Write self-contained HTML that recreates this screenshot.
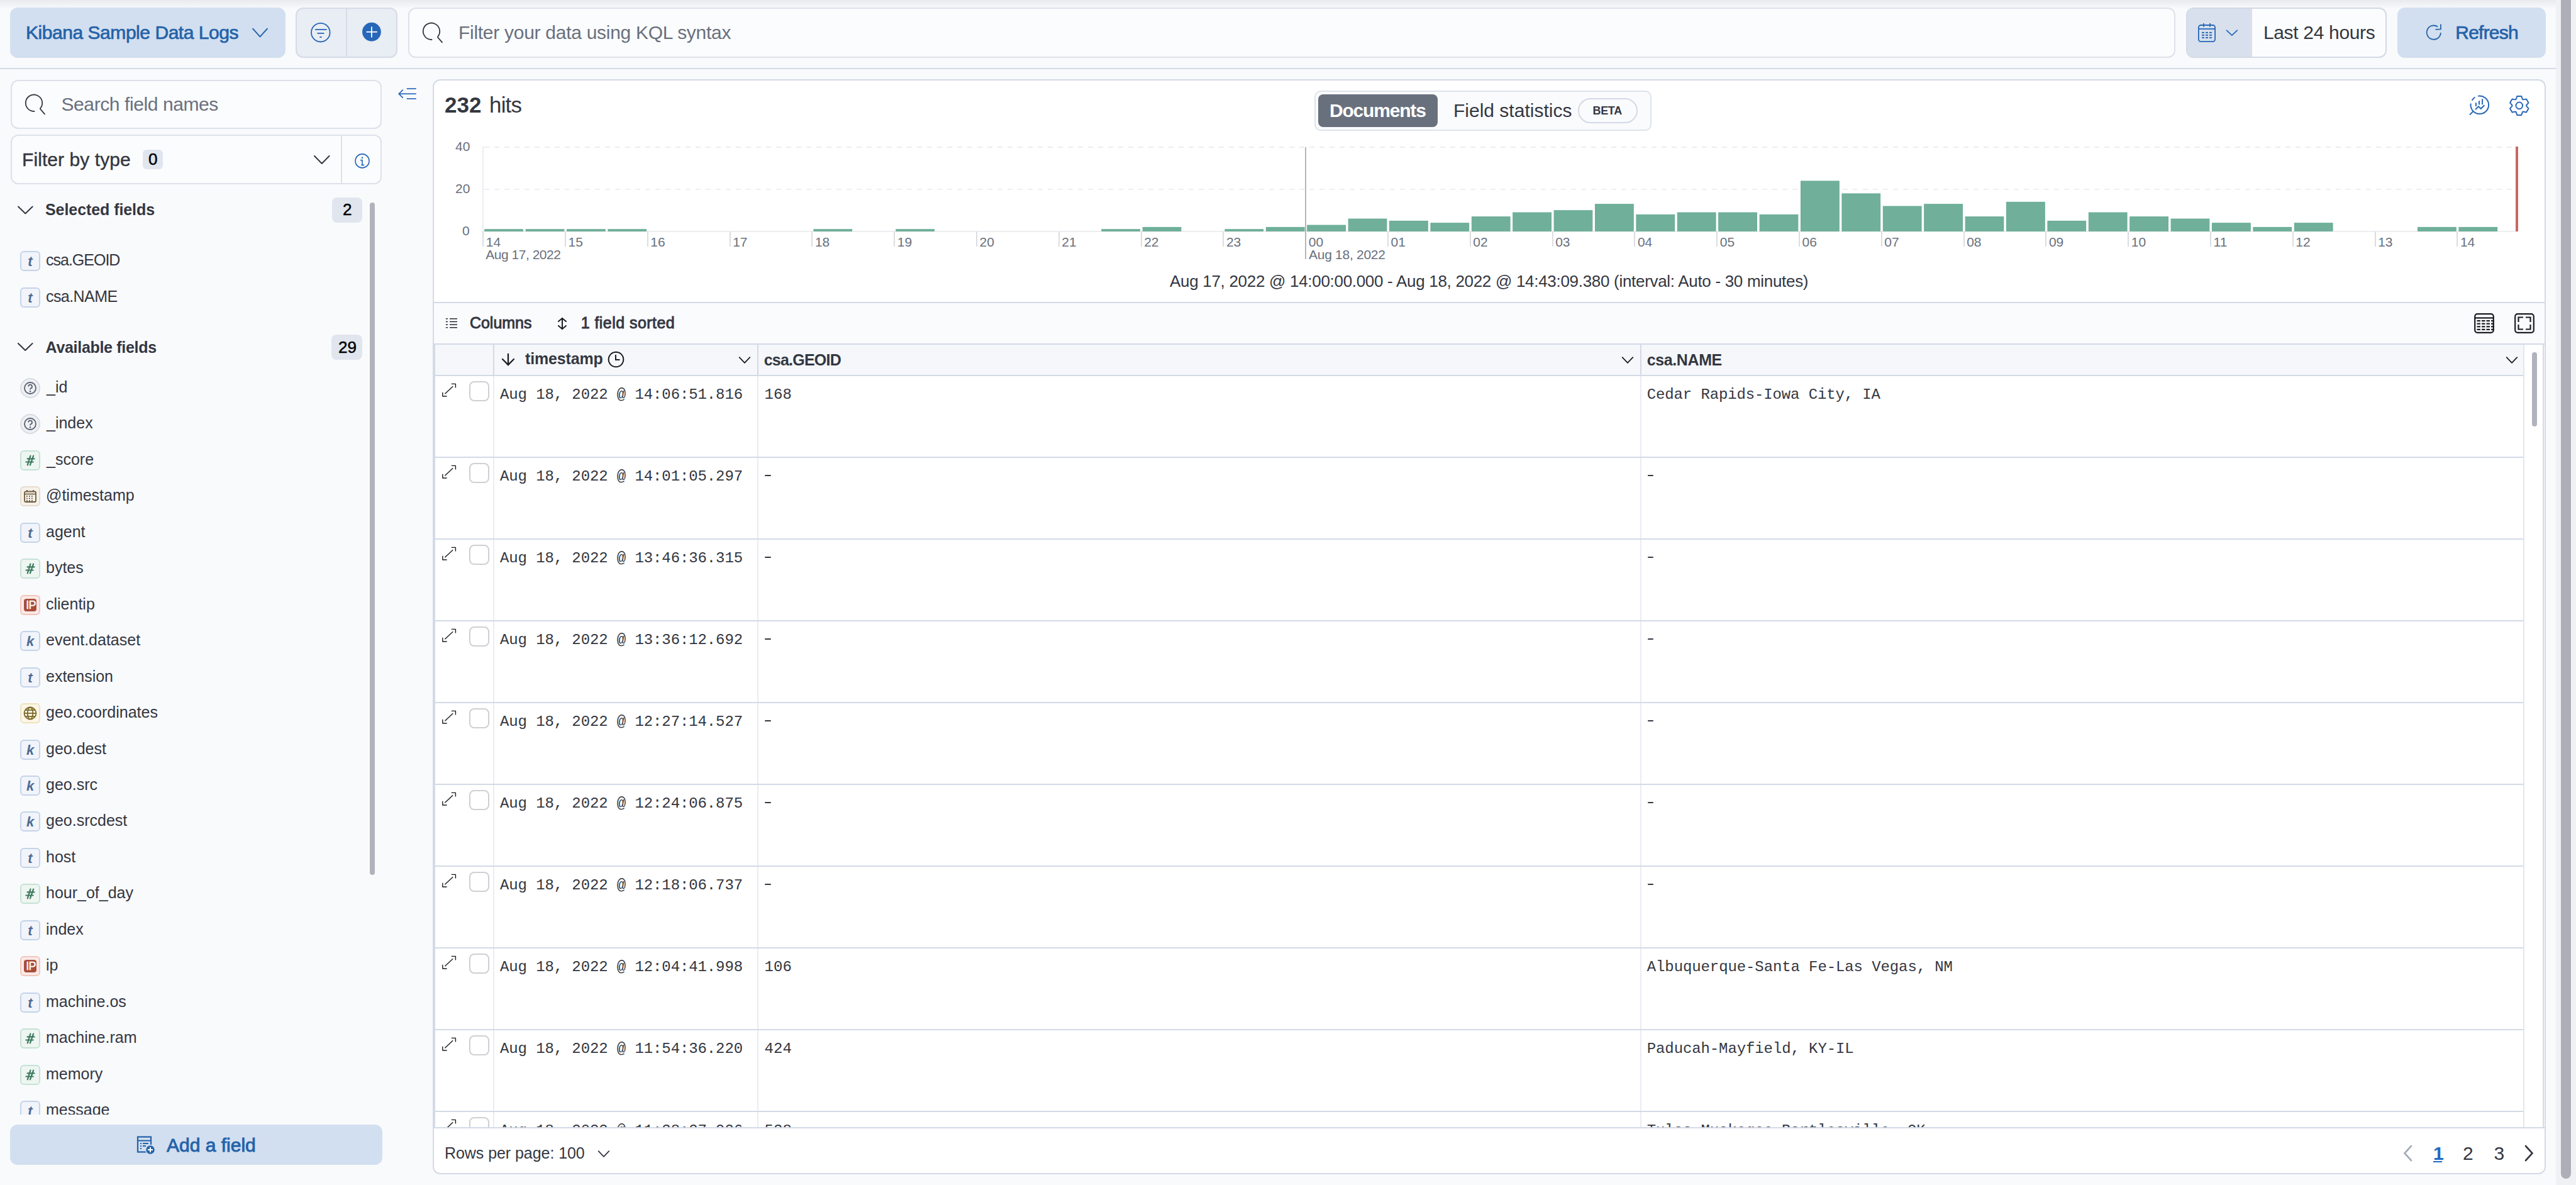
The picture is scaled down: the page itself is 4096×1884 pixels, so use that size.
<!DOCTYPE html><html><head><meta charset="utf-8"><style>
html,body{margin:0;padding:0;}
body{width:4096px;height:1884px;overflow:hidden;position:relative;background:#f9fafc;font-family:'Liberation Sans',sans-serif;}
.t{position:absolute;white-space:pre;}
.b{position:absolute;box-sizing:border-box;}
svg.b{overflow:visible;}
</style></head><body>
<div class="b" style="left:0px;top:0px;width:4064px;height:14px;background:linear-gradient(#e9eaee,rgba(249,250,252,0));"></div>
<div class="b" style="left:16px;top:12px;width:438px;height:80px;background:#d2dff0;border-radius:12px;"></div>
<div class="t" style="left:41.00px;top:37px;font-size:30px;line-height:30px;font-weight:400;font-family:'Liberation Sans',sans-serif;color:#2462a8;letter-spacing:-0.455px;-webkit-text-stroke:0.7px #2462a8;">Kibana Sample Data Logs</div>
<svg class="b" style="left:398px;top:42px;" width="31" height="21" viewBox="0 0 31 21"><polyline points="4.00,3.70 15.50,16.30 27.00,3.70" fill="none" stroke="#2462a8" stroke-width="2" stroke-linecap="round" stroke-linejoin="round"/></svg>
<div class="b" style="left:470px;top:12px;width:162px;height:80px;background:#e9edf4;border:2px solid #d5dbe7;border-radius:12px;"></div>
<div class="b" style="left:550px;top:12px;width:2px;height:80px;background:#d5dbe7;"></div>
<svg class="b" style="left:490px;top:32px;" width="40" height="40" viewBox="0 0 40 40"><circle cx="19.8" cy="19.7" r="14.8" fill="none" stroke="#2767b9" stroke-width="1.8"/><line x1="11" y1="15" x2="29.6" y2="15" stroke="#2767b9" stroke-width="1.8"/><line x1="14.4" y1="20.9" x2="25.4" y2="20.9" stroke="#2767b9" stroke-width="1.8"/><line x1="18.3" y1="27" x2="21.7" y2="27" stroke="#2767b9" stroke-width="1.8"/></svg>
<svg class="b" style="left:570px;top:30px;" width="40" height="40" viewBox="0 0 40 40"><circle cx="20.9" cy="20.75" r="14.9" fill="#2767b9"/><line x1="20.9" y1="12.4" x2="20.9" y2="29.6" stroke="#fff" stroke-width="1.8"/><line x1="12.5" y1="20.75" x2="29.8" y2="20.75" stroke="#fff" stroke-width="1.8"/></svg>
<div class="b" style="left:649px;top:12px;width:2810px;height:80px;background:#fbfcfd;border:2px solid #dde1ea;border-radius:12px;"></div>
<svg class="b" style="left:672px;top:36px;" width="32" height="32" viewBox="0 0 32 32"><path d="M 14.46 26.99 A 13.2 13.2 0 1 1 24.11 22.29" fill="none" stroke="#343741" stroke-width="1.8" stroke-linecap="round"/><line x1="23.9" y1="23.2" x2="31" y2="31.3" stroke="#343741" stroke-width="1.8" stroke-linecap="round"/></svg>
<div class="t" style="left:729.00px;top:37px;font-size:30px;line-height:30px;font-weight:400;font-family:'Liberation Sans',sans-serif;color:#69707d;letter-spacing:-0.281px;">Filter your data using KQL syntax</div>
<div class="b" style="left:3476px;top:12px;width:319px;height:80px;background:#fbfcfd;border:2px solid #d3d9e4;border-radius:12px;overflow:hidden;"></div>
<div class="b" style="left:3478px;top:14px;width:103px;height:76px;background:#d7e0ec;border-radius:10px 0 0 10px;"></div>
<svg class="b" style="left:3485px;top:25px;" width="50" height="50" viewBox="0 0 50 50"><rect x="10.9" y="15" width="26.2" height="26.1" rx="3.6" fill="none" stroke="#2767b9" stroke-width="1.8"/><line x1="10.9" y1="21" x2="37.1" y2="21" stroke="#2767b9" stroke-width="1.8"/><line x1="19" y1="12" x2="19" y2="17.7" stroke="#2767b9" stroke-width="1.8"/><line x1="29" y1="12" x2="29" y2="17.7" stroke="#2767b9" stroke-width="1.8"/><rect x="16" y="25.9" width="4" height="1.9" fill="#2767b9"/><rect x="16" y="29.9" width="4" height="1.9" fill="#2767b9"/><rect x="16" y="33.9" width="4" height="1.9" fill="#2767b9"/><rect x="22" y="25.9" width="4" height="1.9" fill="#2767b9"/><rect x="22" y="29.9" width="4" height="1.9" fill="#2767b9"/><rect x="22" y="33.9" width="4" height="1.9" fill="#2767b9"/><rect x="28" y="25.9" width="4" height="1.9" fill="#2767b9"/><rect x="28" y="29.9" width="4" height="1.9" fill="#2767b9"/><rect x="28" y="33.9" width="4" height="1.9" fill="#2767b9"/></svg>
<svg class="b" style="left:3537px;top:44px;" width="25" height="16" viewBox="0 0 25 16"><polyline points="3.60,4.28 11.90,12.12 20.20,4.28" fill="none" stroke="#2767b9" stroke-width="1.8" stroke-linecap="round" stroke-linejoin="round"/></svg>
<div class="t" style="left:3598.90px;top:37px;font-size:30px;line-height:30px;font-weight:400;font-family:'Liberation Sans',sans-serif;color:#343741;letter-spacing:-0.325px;">Last 24 hours</div>
<div class="b" style="left:3812px;top:12px;width:236px;height:80px;background:#d2dff0;border-radius:12px;"></div>
<svg class="b" style="left:3840px;top:25px;" width="50" height="50" viewBox="0 0 50 50"><path d="M 36.1 17.5 A 11.1 11.1 0 1 0 40.9 27" fill="none" stroke="#2462a8" stroke-width="1.8" stroke-linecap="butt"/><polyline points="41,13.5 41,21.4 32.6,21.9" fill="none" stroke="#2462a8" stroke-width="1.8" stroke-linejoin="round"/></svg>
<div class="t" style="left:3904.30px;top:37px;font-size:30px;line-height:30px;font-weight:400;font-family:'Liberation Sans',sans-serif;color:#2462a8;letter-spacing:-0.783px;-webkit-text-stroke:0.7px #2462a8;">Refresh</div>
<div class="b" style="left:0px;top:108px;width:4064px;height:2px;background:#d3dae6;"></div>
<div class="b" style="left:4064px;top:0px;width:32px;height:1884px;background:#f0f1f4;"></div>
<div class="b" style="left:4072px;top:0px;width:16px;height:1874px;background:#acafb7;border-radius:0 0 8px 8px;"></div>
<div class="b" style="left:17px;top:127px;width:590px;height:78px;background:#fbfcfd;border:2px solid #dde1ea;border-radius:12px;"></div>
<svg class="b" style="left:40px;top:150px;" width="32" height="32" viewBox="0 0 32 32"><path d="M 14.46 26.99 A 13.2 13.2 0 1 1 24.11 22.29" fill="none" stroke="#343741" stroke-width="1.8" stroke-linecap="round"/><line x1="23.9" y1="23.2" x2="31" y2="31.3" stroke="#343741" stroke-width="1.8" stroke-linecap="round"/></svg>
<div class="t" style="left:97.50px;top:151px;font-size:30px;line-height:30px;font-weight:400;font-family:'Liberation Sans',sans-serif;color:#69707d;letter-spacing:-0.412px;">Search field names</div>
<div class="b" style="left:17px;top:214px;width:590px;height:79px;background:#fbfcfd;border:2px solid #dde1ea;border-radius:12px;"></div>
<div class="b" style="left:542px;top:214px;width:2px;height:79px;background:#dde1ea;"></div>
<div class="t" style="left:35.00px;top:239px;font-size:30px;line-height:30px;font-weight:400;font-family:'Liberation Sans',sans-serif;color:#343741;letter-spacing:0.077px;-webkit-text-stroke:0.4px #343741;">Filter by type</div>
<div class="b" style="left:227px;top:238px;width:32px;height:31px;background:#e0e5ee;border-radius:6px;"></div>
<div class="t" style="left:236.00px;top:240px;font-size:26px;line-height:26px;font-weight:400;font-family:'Liberation Sans',sans-serif;color:#000;letter-spacing:0.000px;-webkit-text-stroke:0.5px #000;">0</div>
<svg class="b" style="left:496px;top:244px;" width="32" height="20" viewBox="0 0 32 20"><polyline points="4.00,3.95 15.75,16.05 27.50,3.95" fill="none" stroke="#343741" stroke-width="2" stroke-linecap="round" stroke-linejoin="round"/></svg>
<svg class="b" style="left:556px;top:236px;" width="40" height="40" viewBox="0 0 40 40"><circle cx="20" cy="19.9" r="11" fill="none" stroke="#2767b9" stroke-width="1.6"/><circle cx="20" cy="14.7" r="1.3" fill="#2767b9"/><path d="M 17 18.6 H 20 V 26.4 M 18.3 26.4 H 23.2" fill="none" stroke="#2767b9" stroke-width="1.6"/></svg>
<svg class="b" style="left:25px;top:324px;" width="31" height="19" viewBox="0 0 31 19"><polyline points="4.00,4.45 15.35,15.55 26.70,4.45" fill="none" stroke="#343741" stroke-width="2" stroke-linecap="round" stroke-linejoin="round"/></svg>
<div class="t" style="left:72.00px;top:321px;font-size:25px;line-height:25px;font-weight:700;font-family:'Liberation Sans',sans-serif;color:#343741;letter-spacing:-0.071px;">Selected fields</div>
<div class="b" style="left:528px;top:314px;width:48px;height:40px;background:#e0e5ee;border-radius:8px;"></div>
<div class="t" style="left:545.00px;top:320px;font-size:26px;line-height:26px;font-weight:400;font-family:'Liberation Sans',sans-serif;color:#000;letter-spacing:0.000px;-webkit-text-stroke:0.5px #000;">2</div>
<div class="b" style="left:588px;top:322px;width:8px;height:1069px;background:#b0b3bc;border-radius:4px;"></div>
<div class="b" style="left:32px;top:399px;width:32px;height:32px;background:#f1f4fa;border:2px solid #c5d3e8;border-radius:6px;"></div>
<div class="t" style="left:32px;top:399px;width:32px;height:32px;text-align:center;font:italic bold 22px/33px 'Liberation Sans',sans-serif;color:#4d6b94;">t</div>
<div class="t" style="left:73.00px;top:401px;font-size:25px;line-height:25px;font-weight:400;font-family:'Liberation Sans',sans-serif;color:#343741;letter-spacing:-1.000px;">csa.GEOID</div>
<div class="b" style="left:32px;top:457px;width:32px;height:32px;background:#f1f4fa;border:2px solid #c5d3e8;border-radius:6px;"></div>
<div class="t" style="left:32px;top:457px;width:32px;height:32px;text-align:center;font:italic bold 22px/33px 'Liberation Sans',sans-serif;color:#4d6b94;">t</div>
<div class="t" style="left:73.00px;top:459px;font-size:25px;line-height:25px;font-weight:400;font-family:'Liberation Sans',sans-serif;color:#343741;letter-spacing:-0.571px;">csa.NAME</div>
<svg class="b" style="left:25px;top:542px;" width="31" height="19" viewBox="0 0 31 19"><polyline points="3.85,3.95 15.20,15.05 26.55,3.95" fill="none" stroke="#343741" stroke-width="2" stroke-linecap="round" stroke-linejoin="round"/></svg>
<div class="t" style="left:72.60px;top:540px;font-size:25px;line-height:25px;font-weight:700;font-family:'Liberation Sans',sans-serif;color:#343741;letter-spacing:-0.307px;">Available fields</div>
<div class="b" style="left:527px;top:532px;width:49px;height:40px;background:#e0e5ee;border-radius:8px;"></div>
<div class="t" style="left:538.00px;top:539px;font-size:26px;line-height:26px;font-weight:400;font-family:'Liberation Sans',sans-serif;color:#000;letter-spacing:0.000px;-webkit-text-stroke:0.5px #000;">29</div>
<div class="b" style="left:0;top:580px;width:586px;height:1192px;overflow:hidden;">
<div class="b" style="left:32px;top:21px;width:32px;height:32px;background:#eef0f3;border:2px solid #d8dce3;border-radius:16px;"></div>
<svg class="b" style="left:32px;top:21px;" width="32" height="32" viewBox="0 0 32 32"><circle cx="16" cy="16" r="9" fill="none" stroke="#5a6070" stroke-width="1.8"/><path d="M 13.2 13.6 A 2.9 2.9 0 1 1 16.8 16.4 Q 16 17 16 18.6" fill="none" stroke="#5a6070" stroke-width="1.8"/><circle cx="16" cy="21.3" r="1.2" fill="#5a6070"/></svg>
<div class="t" style="left:74.00px;top:23px;font-size:25px;line-height:25px;font-weight:400;font-family:'Liberation Sans',sans-serif;color:#343741;letter-spacing:0.000px;">_id</div>
<div class="b" style="left:32px;top:78px;width:32px;height:32px;background:#eef0f3;border:2px solid #d8dce3;border-radius:16px;"></div>
<svg class="b" style="left:32px;top:78px;" width="32" height="32" viewBox="0 0 32 32"><circle cx="16" cy="16" r="9" fill="none" stroke="#5a6070" stroke-width="1.8"/><path d="M 13.2 13.6 A 2.9 2.9 0 1 1 16.8 16.4 Q 16 17 16 18.6" fill="none" stroke="#5a6070" stroke-width="1.8"/><circle cx="16" cy="21.3" r="1.2" fill="#5a6070"/></svg>
<div class="t" style="left:74.00px;top:80px;font-size:25px;line-height:25px;font-weight:400;font-family:'Liberation Sans',sans-serif;color:#343741;letter-spacing:0.000px;">_index</div>
<div class="b" style="left:32px;top:136px;width:32px;height:32px;background:#eef6f2;border:2px solid #c4e2d5;border-radius:6px;"></div>
<svg class="b" style="left:32px;top:136px;" width="32" height="32" viewBox="0 0 32 32"><g stroke="#3f7a62" stroke-width="2.2" stroke-linecap="round"><line x1="16.4" y1="8.6" x2="11.8" y2="23.4"/><line x1="21.1" y1="8.6" x2="15.9" y2="23.4"/><line x1="11.6" y1="13.4" x2="22.5" y2="13.4"/><line x1="9.4" y1="18.5" x2="20.7" y2="18.5"/></g></svg>
<div class="t" style="left:74.00px;top:138px;font-size:25px;line-height:25px;font-weight:400;font-family:'Liberation Sans',sans-serif;color:#343741;letter-spacing:0.000px;">_score</div>
<div class="b" style="left:32px;top:193px;width:32px;height:32px;background:#f6f1ea;border:2px solid #e6dccd;border-radius:6px;"></div>
<svg class="b" style="left:32px;top:193px;" width="32" height="32" viewBox="0 0 32 32"><rect x="7" y="8.5" width="18" height="16.5" rx="2" fill="none" stroke="#6e5a3c" stroke-width="1.8"/><line x1="7" y1="12.5" x2="25" y2="12.5" stroke="#6e5a3c" stroke-width="1.6"/><line x1="11" y1="6" x2="11" y2="9" stroke="#6e5a3c" stroke-width="1.8"/><line x1="21" y1="6" x2="21" y2="9" stroke="#6e5a3c" stroke-width="1.8"/><rect x="10" y="15.0" width="1.8" height="1.8" fill="#6e5a3c"/><rect x="10" y="18.6" width="1.8" height="1.8" fill="#6e5a3c"/><rect x="10" y="22.2" width="1.8" height="1.8" fill="#6e5a3c"/><rect x="14" y="15.0" width="1.8" height="1.8" fill="#6e5a3c"/><rect x="14" y="18.6" width="1.8" height="1.8" fill="#6e5a3c"/><rect x="14" y="22.2" width="1.8" height="1.8" fill="#6e5a3c"/><rect x="18" y="15.0" width="1.8" height="1.8" fill="#6e5a3c"/><rect x="18" y="18.6" width="1.8" height="1.8" fill="#6e5a3c"/><rect x="18" y="22.2" width="1.8" height="1.8" fill="#6e5a3c"/></svg>
<div class="t" style="left:73.00px;top:195px;font-size:25px;line-height:25px;font-weight:400;font-family:'Liberation Sans',sans-serif;color:#343741;letter-spacing:0.000px;">@timestamp</div>
<div class="b" style="left:32px;top:251px;width:32px;height:32px;background:#f1f4fa;border:2px solid #c5d3e8;border-radius:6px;"></div>
<div class="t" style="left:32px;top:251px;width:32px;height:32px;text-align:center;font:italic bold 22px/33px 'Liberation Sans',sans-serif;color:#4d6b94;">t</div>
<div class="t" style="left:73.00px;top:253px;font-size:25px;line-height:25px;font-weight:400;font-family:'Liberation Sans',sans-serif;color:#343741;letter-spacing:0.000px;">agent</div>
<div class="b" style="left:32px;top:308px;width:32px;height:32px;background:#eef6f2;border:2px solid #c4e2d5;border-radius:6px;"></div>
<svg class="b" style="left:32px;top:308px;" width="32" height="32" viewBox="0 0 32 32"><g stroke="#3f7a62" stroke-width="2.2" stroke-linecap="round"><line x1="16.4" y1="8.6" x2="11.8" y2="23.4"/><line x1="21.1" y1="8.6" x2="15.9" y2="23.4"/><line x1="11.6" y1="13.4" x2="22.5" y2="13.4"/><line x1="9.4" y1="18.5" x2="20.7" y2="18.5"/></g></svg>
<div class="t" style="left:73.00px;top:310px;font-size:25px;line-height:25px;font-weight:400;font-family:'Liberation Sans',sans-serif;color:#343741;letter-spacing:0.000px;">bytes</div>
<div class="b" style="left:32px;top:366px;width:32px;height:32px;background:#fbe9e6;border:2px solid #f2c6bd;border-radius:6px;"></div>
<div class="b" style="left:38px;top:372px;width:20px;height:20px;background:#a94d3a;border-radius:4px;"></div>
<div class="t" style="left:41.20px;top:373px;font-size:18px;line-height:18px;font-weight:400;font-family:'Liberation Sans',sans-serif;color:#fff;letter-spacing:0.000px;-webkit-text-stroke:0.4px #fff;letter-spacing:-0.8px;">IP</div>
<div class="t" style="left:73.00px;top:368px;font-size:25px;line-height:25px;font-weight:400;font-family:'Liberation Sans',sans-serif;color:#343741;letter-spacing:0.000px;">clientip</div>
<div class="b" style="left:32px;top:423px;width:32px;height:32px;background:#f1f4fa;border:2px solid #c5d3e8;border-radius:6px;"></div>
<div class="t" style="left:32px;top:423px;width:32px;height:32px;text-align:center;font:italic bold 22px/33px 'Liberation Sans',sans-serif;color:#4d6b94;">k</div>
<div class="t" style="left:73.00px;top:425px;font-size:25px;line-height:25px;font-weight:400;font-family:'Liberation Sans',sans-serif;color:#343741;letter-spacing:0.000px;">event.dataset</div>
<div class="b" style="left:32px;top:481px;width:32px;height:32px;background:#f1f4fa;border:2px solid #c5d3e8;border-radius:6px;"></div>
<div class="t" style="left:32px;top:481px;width:32px;height:32px;text-align:center;font:italic bold 22px/33px 'Liberation Sans',sans-serif;color:#4d6b94;">t</div>
<div class="t" style="left:73.00px;top:483px;font-size:25px;line-height:25px;font-weight:400;font-family:'Liberation Sans',sans-serif;color:#343741;letter-spacing:0.000px;">extension</div>
<div class="b" style="left:32px;top:538px;width:32px;height:32px;background:#fbf6e6;border:2px solid #efe3bd;border-radius:6px;"></div>
<svg class="b" style="left:32px;top:538px;" width="32" height="32" viewBox="0 0 32 32"><g fill="none" stroke="#7b6a2a" stroke-width="1.8"><circle cx="16" cy="16" r="9.5"/><ellipse cx="16" cy="16" rx="4.2" ry="9.5"/><line x1="6.5" y1="16" x2="25.5" y2="16"/><line x1="8" y1="11" x2="24" y2="11"/><line x1="8" y1="21" x2="24" y2="21"/></g></svg>
<div class="t" style="left:73.00px;top:540px;font-size:25px;line-height:25px;font-weight:400;font-family:'Liberation Sans',sans-serif;color:#343741;letter-spacing:0.000px;">geo.coordinates</div>
<div class="b" style="left:32px;top:596px;width:32px;height:32px;background:#f1f4fa;border:2px solid #c5d3e8;border-radius:6px;"></div>
<div class="t" style="left:32px;top:596px;width:32px;height:32px;text-align:center;font:italic bold 22px/33px 'Liberation Sans',sans-serif;color:#4d6b94;">k</div>
<div class="t" style="left:73.00px;top:598px;font-size:25px;line-height:25px;font-weight:400;font-family:'Liberation Sans',sans-serif;color:#343741;letter-spacing:0.000px;">geo.dest</div>
<div class="b" style="left:32px;top:653px;width:32px;height:32px;background:#f1f4fa;border:2px solid #c5d3e8;border-radius:6px;"></div>
<div class="t" style="left:32px;top:653px;width:32px;height:32px;text-align:center;font:italic bold 22px/33px 'Liberation Sans',sans-serif;color:#4d6b94;">k</div>
<div class="t" style="left:73.00px;top:655px;font-size:25px;line-height:25px;font-weight:400;font-family:'Liberation Sans',sans-serif;color:#343741;letter-spacing:0.000px;">geo.src</div>
<div class="b" style="left:32px;top:710px;width:32px;height:32px;background:#f1f4fa;border:2px solid #c5d3e8;border-radius:6px;"></div>
<div class="t" style="left:32px;top:710px;width:32px;height:32px;text-align:center;font:italic bold 22px/33px 'Liberation Sans',sans-serif;color:#4d6b94;">k</div>
<div class="t" style="left:73.00px;top:712px;font-size:25px;line-height:25px;font-weight:400;font-family:'Liberation Sans',sans-serif;color:#343741;letter-spacing:0.000px;">geo.srcdest</div>
<div class="b" style="left:32px;top:768px;width:32px;height:32px;background:#f1f4fa;border:2px solid #c5d3e8;border-radius:6px;"></div>
<div class="t" style="left:32px;top:768px;width:32px;height:32px;text-align:center;font:italic bold 22px/33px 'Liberation Sans',sans-serif;color:#4d6b94;">t</div>
<div class="t" style="left:73.00px;top:770px;font-size:25px;line-height:25px;font-weight:400;font-family:'Liberation Sans',sans-serif;color:#343741;letter-spacing:0.000px;">host</div>
<div class="b" style="left:32px;top:825px;width:32px;height:32px;background:#eef6f2;border:2px solid #c4e2d5;border-radius:6px;"></div>
<svg class="b" style="left:32px;top:825px;" width="32" height="32" viewBox="0 0 32 32"><g stroke="#3f7a62" stroke-width="2.2" stroke-linecap="round"><line x1="16.4" y1="8.6" x2="11.8" y2="23.4"/><line x1="21.1" y1="8.6" x2="15.9" y2="23.4"/><line x1="11.6" y1="13.4" x2="22.5" y2="13.4"/><line x1="9.4" y1="18.5" x2="20.7" y2="18.5"/></g></svg>
<div class="t" style="left:73.00px;top:827px;font-size:25px;line-height:25px;font-weight:400;font-family:'Liberation Sans',sans-serif;color:#343741;letter-spacing:0.000px;">hour_of_day</div>
<div class="b" style="left:32px;top:883px;width:32px;height:32px;background:#f1f4fa;border:2px solid #c5d3e8;border-radius:6px;"></div>
<div class="t" style="left:32px;top:883px;width:32px;height:32px;text-align:center;font:italic bold 22px/33px 'Liberation Sans',sans-serif;color:#4d6b94;">t</div>
<div class="t" style="left:73.00px;top:885px;font-size:25px;line-height:25px;font-weight:400;font-family:'Liberation Sans',sans-serif;color:#343741;letter-spacing:0.000px;">index</div>
<div class="b" style="left:32px;top:940px;width:32px;height:32px;background:#fbe9e6;border:2px solid #f2c6bd;border-radius:6px;"></div>
<div class="b" style="left:38px;top:946px;width:20px;height:20px;background:#a94d3a;border-radius:4px;"></div>
<div class="t" style="left:41.20px;top:947px;font-size:18px;line-height:18px;font-weight:400;font-family:'Liberation Sans',sans-serif;color:#fff;letter-spacing:0.000px;-webkit-text-stroke:0.4px #fff;letter-spacing:-0.8px;">IP</div>
<div class="t" style="left:73.00px;top:942px;font-size:25px;line-height:25px;font-weight:400;font-family:'Liberation Sans',sans-serif;color:#343741;letter-spacing:0.000px;">ip</div>
<div class="b" style="left:32px;top:998px;width:32px;height:32px;background:#f1f4fa;border:2px solid #c5d3e8;border-radius:6px;"></div>
<div class="t" style="left:32px;top:998px;width:32px;height:32px;text-align:center;font:italic bold 22px/33px 'Liberation Sans',sans-serif;color:#4d6b94;">t</div>
<div class="t" style="left:73.00px;top:1000px;font-size:25px;line-height:25px;font-weight:400;font-family:'Liberation Sans',sans-serif;color:#343741;letter-spacing:0.000px;">machine.os</div>
<div class="b" style="left:32px;top:1055px;width:32px;height:32px;background:#eef6f2;border:2px solid #c4e2d5;border-radius:6px;"></div>
<svg class="b" style="left:32px;top:1055px;" width="32" height="32" viewBox="0 0 32 32"><g stroke="#3f7a62" stroke-width="2.2" stroke-linecap="round"><line x1="16.4" y1="8.6" x2="11.8" y2="23.4"/><line x1="21.1" y1="8.6" x2="15.9" y2="23.4"/><line x1="11.6" y1="13.4" x2="22.5" y2="13.4"/><line x1="9.4" y1="18.5" x2="20.7" y2="18.5"/></g></svg>
<div class="t" style="left:73.00px;top:1057px;font-size:25px;line-height:25px;font-weight:400;font-family:'Liberation Sans',sans-serif;color:#343741;letter-spacing:0.000px;">machine.ram</div>
<div class="b" style="left:32px;top:1113px;width:32px;height:32px;background:#eef6f2;border:2px solid #c4e2d5;border-radius:6px;"></div>
<svg class="b" style="left:32px;top:1113px;" width="32" height="32" viewBox="0 0 32 32"><g stroke="#3f7a62" stroke-width="2.2" stroke-linecap="round"><line x1="16.4" y1="8.6" x2="11.8" y2="23.4"/><line x1="21.1" y1="8.6" x2="15.9" y2="23.4"/><line x1="11.6" y1="13.4" x2="22.5" y2="13.4"/><line x1="9.4" y1="18.5" x2="20.7" y2="18.5"/></g></svg>
<div class="t" style="left:73.00px;top:1115px;font-size:25px;line-height:25px;font-weight:400;font-family:'Liberation Sans',sans-serif;color:#343741;letter-spacing:0.000px;">memory</div>
<div class="b" style="left:32px;top:1170px;width:32px;height:32px;background:#f1f4fa;border:2px solid #c5d3e8;border-radius:6px;"></div>
<div class="t" style="left:32px;top:1170px;width:32px;height:32px;text-align:center;font:italic bold 22px/33px 'Liberation Sans',sans-serif;color:#4d6b94;">t</div>
<div class="t" style="left:73.00px;top:1172px;font-size:25px;line-height:25px;font-weight:400;font-family:'Liberation Sans',sans-serif;color:#343741;letter-spacing:0.000px;">message</div>
</div>
<div class="b" style="left:16px;top:1788px;width:592px;height:64px;background:#d2dff0;border-radius:12px;"></div>
<svg class="b" style="left:218px;top:1806px;" width="30" height="30" viewBox="0 0 30 30"><rect x="1" y="1.5" width="21" height="24" fill="none" stroke="#2462a8" stroke-width="2.2"/><line x1="1" y1="7.5" x2="22" y2="7.5" stroke="#2462a8" stroke-width="2"/><g stroke="#2462a8" stroke-width="2"><line x1="5" y1="12" x2="7" y2="12"/><line x1="9" y1="12" x2="18" y2="12"/><line x1="5" y1="16" x2="7" y2="16"/><line x1="9" y1="16" x2="14" y2="16"/><line x1="5" y1="20" x2="7" y2="20"/></g><circle cx="21" cy="22" r="7.5" fill="#2462a8" stroke="#d2dff0" stroke-width="1.5"/><line x1="21" y1="18" x2="21" y2="26" stroke="#fff" stroke-width="2"/><line x1="17" y1="22" x2="25" y2="22" stroke="#fff" stroke-width="2"/></svg>
<div class="t" style="left:265.00px;top:1806px;font-size:30px;line-height:30px;font-weight:400;font-family:'Liberation Sans',sans-serif;color:#2462a8;letter-spacing:0.000px;-webkit-text-stroke:0.9px #2462a8;">Add a field</div>
<svg class="b" style="left:630px;top:135px;" width="40" height="30" viewBox="0 0 40 30"><g fill="none" stroke="#2767b9" stroke-width="1.7" stroke-linecap="butt"><polyline points="10.8,7.7 4.2,14.2 10.8,20.7"/><line x1="4.2" y1="14.2" x2="31.7" y2="14.2"/><line x1="16.7" y1="6" x2="31.7" y2="6"/><line x1="16.7" y1="22" x2="31.7" y2="22"/></g></svg>
<div class="b" style="left:688px;top:126px;width:3360px;height:1741px;background:#fff;border:2px solid #d3dae6;border-radius:12px;"></div>
<div class="t" style="left:707.00px;top:149px;font-size:35px;line-height:35px;font-weight:700;font-family:'Liberation Sans',sans-serif;color:#343741;letter-spacing:0.000px;">232</div>
<div class="t" style="left:778.00px;top:149px;font-size:35px;line-height:35px;font-weight:400;font-family:'Liberation Sans',sans-serif;color:#343741;letter-spacing:-0.833px;">hits</div>
<div class="b" style="left:2090px;top:144px;width:536px;height:64px;background:#fafbfd;border:2px solid #dde2eb;border-radius:10px;"></div>
<div class="b" style="left:2096px;top:150px;width:190px;height:52px;background:#69707d;border-radius:8px;"></div>
<div class="t" style="left:2114.00px;top:161px;font-size:30px;line-height:30px;font-weight:700;font-family:'Liberation Sans',sans-serif;color:#fff;letter-spacing:-1.188px;">Documents</div>
<div class="t" style="left:2311.00px;top:161px;font-size:30px;line-height:30px;font-weight:400;font-family:'Liberation Sans',sans-serif;color:#343741;letter-spacing:0.000px;">Field statistics</div>
<div class="b" style="left:2509px;top:156px;width:95px;height:40px;background:#fafbfd;border:2px solid #d3dae6;border-radius:20px;"></div>
<div class="t" style="left:2532.50px;top:167px;font-size:18px;line-height:18px;font-weight:700;font-family:'Liberation Sans',sans-serif;color:#343741;letter-spacing:-0.333px;">BETA</div>
<svg class="b" style="left:3915px;top:140px;" width="120" height="55" viewBox="0 0 120 55"><g fill="none" stroke="#2767b9" stroke-width="2" stroke-linecap="butt" stroke-linejoin="miter"><path d="M 25.2 12.7 A 14.3 14.3 0 1 1 13.7 24.5"/><path d="M 15.6 19.7 A 14.3 14.3 0 0 1 20.4 14.5"/><line x1="17.9" y1="36.6" x2="12" y2="42.5"/><polyline points="21,34.2 25.9,29.3 29.8,32.8 35.4,27.3"/><line x1="21.9" y1="23.3" x2="21.9" y2="29"/><line x1="27" y1="20.3" x2="27" y2="26.5"/><line x1="32.1" y1="17.2" x2="32.1" y2="26.3"/></g><polygon points="85.70,17.71 87.34,12.89 94.26,12.89 95.90,17.71 97.08,18.38 102.06,17.40 105.53,23.40 102.18,27.22 102.18,28.58 105.53,32.40 102.06,38.40 97.08,37.42 95.90,38.09 94.26,42.91 87.34,42.91 85.70,38.09 84.52,37.42 79.54,38.40 76.07,32.40 79.42,28.58 79.42,27.22 76.07,23.40 79.54,17.40 84.52,18.38" fill="none" stroke="#2767b9" stroke-width="2" stroke-linejoin="round"/><circle cx="90.8" cy="27.9" r="5.3" fill="none" stroke="#2767b9" stroke-width="2"/></svg>
<div class="t" style="left:724.00px;top:222px;font-size:21px;line-height:21px;font-weight:400;font-family:'Liberation Sans',sans-serif;color:#69707d;letter-spacing:0.000px;">40</div>
<div class="t" style="left:724.00px;top:289px;font-size:21px;line-height:21px;font-weight:400;font-family:'Liberation Sans',sans-serif;color:#69707d;letter-spacing:0.000px;">20</div>
<div class="t" style="left:735.00px;top:356px;font-size:21px;line-height:21px;font-weight:400;font-family:'Liberation Sans',sans-serif;color:#69707d;letter-spacing:0.000px;">0</div>
<div class="b" style="left:767px;top:232px;width:2px;height:136px;background:#eceef2;"></div>
<svg class="b" style="left:770px;top:232px" width="3224" height="4"><line x1="0" y1="2" x2="3224" y2="2" stroke="#eceef2" stroke-width="2" stroke-dasharray="8 8"/></svg>
<svg class="b" style="left:770px;top:299px" width="3224" height="4"><line x1="0" y1="2" x2="3224" y2="2" stroke="#eceef2" stroke-width="2" stroke-dasharray="8 8"/></svg>
<div class="b" style="left:768px;top:367px;width:3234px;height:2px;background:#eceef2;"></div>
<svg class="b" style="left:768px;top:232px" width="3240" height="140"><rect x="2.75" y="132.76" width="60.7" height="2.54" fill="#70b09a" stroke="#66aa93" stroke-width="1"/><rect x="68.15" y="132.76" width="60.7" height="2.54" fill="#70b09a" stroke="#66aa93" stroke-width="1"/><rect x="133.55" y="132.76" width="60.7" height="2.54" fill="#70b09a" stroke="#66aa93" stroke-width="1"/><rect x="198.95" y="132.76" width="60.7" height="2.54" fill="#70b09a" stroke="#66aa93" stroke-width="1"/><rect x="525.95" y="132.76" width="60.7" height="2.54" fill="#70b09a" stroke="#66aa93" stroke-width="1"/><rect x="656.75" y="132.76" width="60.7" height="2.54" fill="#70b09a" stroke="#66aa93" stroke-width="1"/><rect x="983.75" y="132.76" width="60.7" height="2.54" fill="#70b09a" stroke="#66aa93" stroke-width="1"/><rect x="1049.15" y="129.42" width="60.7" height="5.88" fill="#70b09a" stroke="#66aa93" stroke-width="1"/><rect x="1179.95" y="132.76" width="60.7" height="2.54" fill="#70b09a" stroke="#66aa93" stroke-width="1"/><rect x="1245.35" y="129.42" width="60.7" height="5.88" fill="#70b09a" stroke="#66aa93" stroke-width="1"/><rect x="1310.75" y="126.08" width="60.7" height="9.22" fill="#70b09a" stroke="#66aa93" stroke-width="1"/><rect x="1376.15" y="116.06" width="60.7" height="19.24" fill="#70b09a" stroke="#66aa93" stroke-width="1"/><rect x="1441.55" y="119.40" width="60.7" height="15.90" fill="#70b09a" stroke="#66aa93" stroke-width="1"/><rect x="1506.95" y="122.74" width="60.7" height="12.56" fill="#70b09a" stroke="#66aa93" stroke-width="1"/><rect x="1572.35" y="112.72" width="60.7" height="22.58" fill="#70b09a" stroke="#66aa93" stroke-width="1"/><rect x="1637.75" y="106.04" width="60.7" height="29.26" fill="#70b09a" stroke="#66aa93" stroke-width="1"/><rect x="1703.15" y="102.70" width="60.7" height="32.60" fill="#70b09a" stroke="#66aa93" stroke-width="1"/><rect x="1768.55" y="92.68" width="60.7" height="42.62" fill="#70b09a" stroke="#66aa93" stroke-width="1"/><rect x="1833.95" y="109.38" width="60.7" height="25.92" fill="#70b09a" stroke="#66aa93" stroke-width="1"/><rect x="1899.35" y="106.04" width="60.7" height="29.26" fill="#70b09a" stroke="#66aa93" stroke-width="1"/><rect x="1964.75" y="106.04" width="60.7" height="29.26" fill="#70b09a" stroke="#66aa93" stroke-width="1"/><rect x="2030.15" y="109.38" width="60.7" height="25.92" fill="#70b09a" stroke="#66aa93" stroke-width="1"/><rect x="2095.55" y="55.94" width="60.7" height="79.36" fill="#70b09a" stroke="#66aa93" stroke-width="1"/><rect x="2160.95" y="75.98" width="60.7" height="59.32" fill="#70b09a" stroke="#66aa93" stroke-width="1"/><rect x="2226.35" y="96.02" width="60.7" height="39.28" fill="#70b09a" stroke="#66aa93" stroke-width="1"/><rect x="2291.75" y="92.68" width="60.7" height="42.62" fill="#70b09a" stroke="#66aa93" stroke-width="1"/><rect x="2357.15" y="112.72" width="60.7" height="22.58" fill="#70b09a" stroke="#66aa93" stroke-width="1"/><rect x="2422.55" y="89.34" width="60.7" height="45.96" fill="#70b09a" stroke="#66aa93" stroke-width="1"/><rect x="2487.95" y="119.40" width="60.7" height="15.90" fill="#70b09a" stroke="#66aa93" stroke-width="1"/><rect x="2553.35" y="106.04" width="60.7" height="29.26" fill="#70b09a" stroke="#66aa93" stroke-width="1"/><rect x="2618.75" y="112.72" width="60.7" height="22.58" fill="#70b09a" stroke="#66aa93" stroke-width="1"/><rect x="2684.15" y="116.06" width="60.7" height="19.24" fill="#70b09a" stroke="#66aa93" stroke-width="1"/><rect x="2749.55" y="122.74" width="60.7" height="12.56" fill="#70b09a" stroke="#66aa93" stroke-width="1"/><rect x="2814.95" y="129.42" width="60.7" height="5.88" fill="#70b09a" stroke="#66aa93" stroke-width="1"/><rect x="2880.35" y="122.74" width="60.7" height="12.56" fill="#70b09a" stroke="#66aa93" stroke-width="1"/><rect x="3076.55" y="129.42" width="60.7" height="5.88" fill="#70b09a" stroke="#66aa93" stroke-width="1"/><rect x="3141.95" y="129.42" width="60.7" height="5.88" fill="#70b09a" stroke="#66aa93" stroke-width="1"/></svg>
<div class="b" style="left:767px;top:368px;width:2px;height:24px;background:#dcdde1;"></div>
<div class="t" style="left:772.75px;top:374px;font-size:21px;line-height:21px;font-weight:400;font-family:'Liberation Sans',sans-serif;color:#69707d;letter-spacing:0.000px;">14</div>
<div class="b" style="left:898px;top:368px;width:2px;height:24px;background:#dcdde1;"></div>
<div class="t" style="left:903.55px;top:374px;font-size:21px;line-height:21px;font-weight:400;font-family:'Liberation Sans',sans-serif;color:#69707d;letter-spacing:0.000px;">15</div>
<div class="b" style="left:1029px;top:368px;width:2px;height:24px;background:#dcdde1;"></div>
<div class="t" style="left:1034.35px;top:374px;font-size:21px;line-height:21px;font-weight:400;font-family:'Liberation Sans',sans-serif;color:#69707d;letter-spacing:0.000px;">16</div>
<div class="b" style="left:1160px;top:368px;width:2px;height:24px;background:#dcdde1;"></div>
<div class="t" style="left:1165.15px;top:374px;font-size:21px;line-height:21px;font-weight:400;font-family:'Liberation Sans',sans-serif;color:#69707d;letter-spacing:0.000px;">17</div>
<div class="b" style="left:1290px;top:368px;width:2px;height:24px;background:#dcdde1;"></div>
<div class="t" style="left:1295.95px;top:374px;font-size:21px;line-height:21px;font-weight:400;font-family:'Liberation Sans',sans-serif;color:#69707d;letter-spacing:0.000px;">18</div>
<div class="b" style="left:1421px;top:368px;width:2px;height:24px;background:#dcdde1;"></div>
<div class="t" style="left:1426.75px;top:374px;font-size:21px;line-height:21px;font-weight:400;font-family:'Liberation Sans',sans-serif;color:#69707d;letter-spacing:0.000px;">19</div>
<div class="b" style="left:1552px;top:368px;width:2px;height:24px;background:#dcdde1;"></div>
<div class="t" style="left:1557.55px;top:374px;font-size:21px;line-height:21px;font-weight:400;font-family:'Liberation Sans',sans-serif;color:#69707d;letter-spacing:0.000px;">20</div>
<div class="b" style="left:1683px;top:368px;width:2px;height:24px;background:#dcdde1;"></div>
<div class="t" style="left:1688.35px;top:374px;font-size:21px;line-height:21px;font-weight:400;font-family:'Liberation Sans',sans-serif;color:#69707d;letter-spacing:0.000px;">21</div>
<div class="b" style="left:1814px;top:368px;width:2px;height:24px;background:#dcdde1;"></div>
<div class="t" style="left:1819.15px;top:374px;font-size:21px;line-height:21px;font-weight:400;font-family:'Liberation Sans',sans-serif;color:#69707d;letter-spacing:0.000px;">22</div>
<div class="b" style="left:1944px;top:368px;width:2px;height:24px;background:#dcdde1;"></div>
<div class="t" style="left:1949.95px;top:374px;font-size:21px;line-height:21px;font-weight:400;font-family:'Liberation Sans',sans-serif;color:#69707d;letter-spacing:0.000px;">23</div>
<div class="b" style="left:2075px;top:368px;width:2px;height:24px;background:#dcdde1;"></div>
<div class="t" style="left:2080.75px;top:374px;font-size:21px;line-height:21px;font-weight:400;font-family:'Liberation Sans',sans-serif;color:#69707d;letter-spacing:0.000px;">00</div>
<div class="b" style="left:2206px;top:368px;width:2px;height:24px;background:#dcdde1;"></div>
<div class="t" style="left:2211.55px;top:374px;font-size:21px;line-height:21px;font-weight:400;font-family:'Liberation Sans',sans-serif;color:#69707d;letter-spacing:0.000px;">01</div>
<div class="b" style="left:2337px;top:368px;width:2px;height:24px;background:#dcdde1;"></div>
<div class="t" style="left:2342.35px;top:374px;font-size:21px;line-height:21px;font-weight:400;font-family:'Liberation Sans',sans-serif;color:#69707d;letter-spacing:0.000px;">02</div>
<div class="b" style="left:2468px;top:368px;width:2px;height:24px;background:#dcdde1;"></div>
<div class="t" style="left:2473.15px;top:374px;font-size:21px;line-height:21px;font-weight:400;font-family:'Liberation Sans',sans-serif;color:#69707d;letter-spacing:0.000px;">03</div>
<div class="b" style="left:2598px;top:368px;width:2px;height:24px;background:#dcdde1;"></div>
<div class="t" style="left:2603.95px;top:374px;font-size:21px;line-height:21px;font-weight:400;font-family:'Liberation Sans',sans-serif;color:#69707d;letter-spacing:0.000px;">04</div>
<div class="b" style="left:2729px;top:368px;width:2px;height:24px;background:#dcdde1;"></div>
<div class="t" style="left:2734.75px;top:374px;font-size:21px;line-height:21px;font-weight:400;font-family:'Liberation Sans',sans-serif;color:#69707d;letter-spacing:0.000px;">05</div>
<div class="b" style="left:2860px;top:368px;width:2px;height:24px;background:#dcdde1;"></div>
<div class="t" style="left:2865.55px;top:374px;font-size:21px;line-height:21px;font-weight:400;font-family:'Liberation Sans',sans-serif;color:#69707d;letter-spacing:0.000px;">06</div>
<div class="b" style="left:2991px;top:368px;width:2px;height:24px;background:#dcdde1;"></div>
<div class="t" style="left:2996.35px;top:374px;font-size:21px;line-height:21px;font-weight:400;font-family:'Liberation Sans',sans-serif;color:#69707d;letter-spacing:0.000px;">07</div>
<div class="b" style="left:3122px;top:368px;width:2px;height:24px;background:#dcdde1;"></div>
<div class="t" style="left:3127.15px;top:374px;font-size:21px;line-height:21px;font-weight:400;font-family:'Liberation Sans',sans-serif;color:#69707d;letter-spacing:0.000px;">08</div>
<div class="b" style="left:3252px;top:368px;width:2px;height:24px;background:#dcdde1;"></div>
<div class="t" style="left:3257.95px;top:374px;font-size:21px;line-height:21px;font-weight:400;font-family:'Liberation Sans',sans-serif;color:#69707d;letter-spacing:0.000px;">09</div>
<div class="b" style="left:3383px;top:368px;width:2px;height:24px;background:#dcdde1;"></div>
<div class="t" style="left:3388.75px;top:374px;font-size:21px;line-height:21px;font-weight:400;font-family:'Liberation Sans',sans-serif;color:#69707d;letter-spacing:0.000px;">10</div>
<div class="b" style="left:3514px;top:368px;width:2px;height:24px;background:#dcdde1;"></div>
<div class="t" style="left:3519.55px;top:374px;font-size:21px;line-height:21px;font-weight:400;font-family:'Liberation Sans',sans-serif;color:#69707d;letter-spacing:0.000px;">11</div>
<div class="b" style="left:3645px;top:368px;width:2px;height:24px;background:#dcdde1;"></div>
<div class="t" style="left:3650.35px;top:374px;font-size:21px;line-height:21px;font-weight:400;font-family:'Liberation Sans',sans-serif;color:#69707d;letter-spacing:0.000px;">12</div>
<div class="b" style="left:3776px;top:368px;width:2px;height:24px;background:#dcdde1;"></div>
<div class="t" style="left:3781.15px;top:374px;font-size:21px;line-height:21px;font-weight:400;font-family:'Liberation Sans',sans-serif;color:#69707d;letter-spacing:0.000px;">13</div>
<div class="b" style="left:3906px;top:368px;width:2px;height:24px;background:#dcdde1;"></div>
<div class="t" style="left:3911.95px;top:374px;font-size:21px;line-height:21px;font-weight:400;font-family:'Liberation Sans',sans-serif;color:#69707d;letter-spacing:0.000px;">14</div>
<div class="t" style="left:772.30px;top:394px;font-size:21px;line-height:21px;font-weight:400;font-family:'Liberation Sans',sans-serif;color:#69707d;letter-spacing:-0.482px;">Aug 17, 2022</div>
<div class="t" style="left:2081.00px;top:394px;font-size:21px;line-height:21px;font-weight:400;font-family:'Liberation Sans',sans-serif;color:#69707d;letter-spacing:-0.273px;">Aug 18, 2022</div>
<div class="b" style="left:2075px;top:234px;width:2px;height:178px;background:#b5b7bc;"></div>
<div class="b" style="left:4000px;top:233px;width:4px;height:135px;background:#c96764;"></div>
<div class="t" style="left:1860.00px;top:434px;font-size:26px;line-height:26px;font-weight:400;font-family:'Liberation Sans',sans-serif;color:#343741;letter-spacing:-0.302px;">Aug 17, 2022 @ 14:00:00.000 - Aug 18, 2022 @ 14:43:09.380 (interval: Auto - 30 minutes)</div>
<div class="b" style="left:690px;top:480px;width:3356px;height:2px;background:#d3dae6;"></div>
<div class="b" style="left:690px;top:482px;width:3356px;height:64px;background:#fafbfd;"></div>
<div class="b" style="left:690px;top:546px;width:3356px;height:2px;background:#d3dae6;"></div>
<svg class="b" style="left:705px;top:500px;" width="26" height="26" viewBox="0 0 26 26"><g fill="#1a1c21"><rect x="3.9" y="6.10" width="3.1" height="1.4"/><rect x="10" y="6.10" width="12" height="1.4"/><rect x="3.9" y="10.76" width="3.1" height="1.4"/><rect x="10" y="10.76" width="12" height="1.4"/><rect x="3.9" y="15.42" width="3.1" height="1.4"/><rect x="10" y="15.42" width="12" height="1.4"/><rect x="3.9" y="20.08" width="3.1" height="1.4"/><rect x="10" y="20.08" width="12" height="1.4"/></g></svg>
<div class="t" style="left:747.00px;top:501px;font-size:25px;line-height:25px;font-weight:400;font-family:'Liberation Sans',sans-serif;color:#343741;letter-spacing:-0.042px;-webkit-text-stroke:0.9px #343741;">Columns</div>
<svg class="b" style="left:886px;top:505px;" width="16" height="19" viewBox="0 0 16 19"><g fill="none" stroke="#1a1c21" stroke-width="2" stroke-linecap="round"><polyline points="2,6 8,1 14,6"/><polyline points="2,13 8,18 14,13"/><line x1="8" y1="1" x2="8" y2="18"/></g></svg>
<div class="t" style="left:923.75px;top:501px;font-size:25px;line-height:25px;font-weight:400;font-family:'Liberation Sans',sans-serif;color:#343741;letter-spacing:0.442px;-webkit-text-stroke:0.9px #343741;">1 field sorted</div>
<svg class="b" style="left:3934px;top:498px;" width="32" height="32" viewBox="0 0 32 32"><g fill="none" stroke="#1a1c21" stroke-width="2.2"><rect x="1.2" y="1.2" width="29.6" height="29.6" rx="4"/><line x1="1" y1="7.5" x2="31" y2="7.5"/></g><g fill="#1a1c21"><rect x="4.5" y="11.0" width="5.5" height="2.2"/><rect x="4.5" y="15.6" width="5.5" height="2.2"/><rect x="4.5" y="20.2" width="5.5" height="2.2"/><rect x="4.5" y="24.799999999999997" width="5.5" height="2.2"/><rect x="12.0" y="11.0" width="5.5" height="2.2"/><rect x="12.0" y="15.6" width="5.5" height="2.2"/><rect x="12.0" y="20.2" width="5.5" height="2.2"/><rect x="12.0" y="24.799999999999997" width="5.5" height="2.2"/><rect x="19.5" y="11.0" width="5.5" height="2.2"/><rect x="19.5" y="15.6" width="5.5" height="2.2"/><rect x="19.5" y="20.2" width="5.5" height="2.2"/><rect x="19.5" y="24.799999999999997" width="5.5" height="2.2"/><rect x="27.0" y="11.0" width="5" height="2.2"/><rect x="27.0" y="15.6" width="5" height="2.2"/><rect x="27.0" y="20.2" width="5" height="2.2"/><rect x="27.0" y="24.799999999999997" width="5" height="2.2"/></g></svg>
<svg class="b" style="left:3998px;top:498px;" width="32" height="32" viewBox="0 0 32 32"><g fill="none" stroke="#1a1c21" stroke-width="2.2"><rect x="1.2" y="1.2" width="29.6" height="29.6" rx="4"/><polyline points="6.5,14 6.5,6.5 14,6.5"/><polyline points="18,6.5 25.5,6.5 25.5,14"/><polyline points="25.5,18 25.5,25.5 18,25.5"/><polyline points="14,25.5 6.5,25.5 6.5,18"/></g></svg>
<div class="b" style="left:691px;top:548px;width:3322px;height:49px;background:#f5f7fa;"></div>
<div class="b" style="left:691px;top:596px;width:3322px;height:2px;background:#d3dae6;"></div>
<div class="b" style="left:690px;top:548px;width:2px;height:1245px;background:#d3dae6;"></div>
<div class="b" style="left:4043px;top:548px;width:2px;height:1245px;background:#d3dae6;"></div>
<div class="b" style="left:784px;top:548px;width:2px;height:49px;background:#d3dae6;"></div>
<div class="b" style="left:784px;top:598px;width:2px;height:1195px;background:#e9ecf2;"></div>
<div class="b" style="left:1204px;top:548px;width:2px;height:49px;background:#d3dae6;"></div>
<div class="b" style="left:1204px;top:598px;width:2px;height:1195px;background:#e9ecf2;"></div>
<div class="b" style="left:2608px;top:548px;width:2px;height:49px;background:#d3dae6;"></div>
<div class="b" style="left:2608px;top:598px;width:2px;height:1195px;background:#e9ecf2;"></div>
<div class="b" style="left:4012px;top:548px;width:2px;height:1245px;background:#e3e7ee;"></div>
<svg class="b" style="left:797px;top:562px;" width="24" height="20" viewBox="0 0 24 20"><g fill="none" stroke="#1a1c21" stroke-width="2.3" stroke-linecap="round"><line x1="11" y1="1" x2="11" y2="18"/><polyline points="2,9 11,18 20,9"/></g></svg>
<div class="t" style="left:835.00px;top:558px;font-size:25px;line-height:25px;font-weight:700;font-family:'Liberation Sans',sans-serif;color:#343741;letter-spacing:-0.156px;">timestamp</div>
<svg class="b" style="left:966px;top:558px;" width="27" height="27" viewBox="0 0 27 27"><g fill="none" stroke="#1a1c21" stroke-width="2"><circle cx="13.5" cy="13.5" r="11.8"/><polyline points="13,6 13,14 19.5,14"/></g></svg>
<svg class="b" style="left:1172px;top:564px;" width="25" height="17" viewBox="0 0 25 17"><polyline points="3.65,4.13 12.00,12.87 20.35,4.13" fill="none" stroke="#1a1c21" stroke-width="1.8" stroke-linecap="round" stroke-linejoin="round"/></svg>
<div class="t" style="left:1214.75px;top:560px;font-size:25px;line-height:25px;font-weight:700;font-family:'Liberation Sans',sans-serif;color:#343741;letter-spacing:-0.781px;">csa.GEOID</div>
<svg class="b" style="left:2576px;top:564px;" width="25" height="17" viewBox="0 0 25 17"><polyline points="3.65,4.13 12.00,12.87 20.35,4.13" fill="none" stroke="#1a1c21" stroke-width="1.8" stroke-linecap="round" stroke-linejoin="round"/></svg>
<div class="t" style="left:2618.75px;top:560px;font-size:25px;line-height:25px;font-weight:700;font-family:'Liberation Sans',sans-serif;color:#343741;letter-spacing:-0.393px;">csa.NAME</div>
<svg class="b" style="left:3982px;top:564px;" width="25" height="17" viewBox="0 0 25 17"><polyline points="3.65,4.13 12.00,12.87 20.35,4.13" fill="none" stroke="#1a1c21" stroke-width="1.8" stroke-linecap="round" stroke-linejoin="round"/></svg>
<div class="b" style="left:4026px;top:560px;width:8px;height:118px;background:#b0b3bc;border-radius:4px;"></div>
<div class="b" style="left:0;top:598px;width:4096px;height:1194px;overflow:hidden;">
<div class="b" style="left:692px;top:128px;width:3320px;height:2px;background:#d3dae6;"></div>
<svg class="b" style="left:700px;top:10px;" width="30" height="30" viewBox="0 0 30 30"><g fill="none" stroke="#1a1c21" stroke-width="1.4" stroke-linecap="butt" stroke-linejoin="round"><line x1="7.4" y1="18.3" x2="20.2" y2="6.3"/><polyline points="17.7,2.4 24.4,2.4 24.4,8.6"/><polyline points="3.8,15.7 3.8,22 10.6,22"/></g></svg>
<div class="b" style="left:746px;top:8px;width:32px;height:32px;background:#fff;border:2px solid #cfd0d3;border-radius:8px;"></div>
<div class="t" style="left:795.00px;top:18px;font-size:24px;line-height:24px;font-weight:400;font-family:'Liberation Mono',monospace;color:#343741;letter-spacing:-0.106px;">Aug 18, 2022 @ 14:06:51.816</div>
<div class="t" style="left:1215.60px;top:18px;font-size:24px;line-height:24px;font-weight:400;font-family:'Liberation Mono',monospace;color:#343741;letter-spacing:0.000px;">168</div>
<div class="t" style="left:2618.75px;top:18px;font-size:24px;line-height:24px;font-weight:400;font-family:'Liberation Mono',monospace;color:#343741;letter-spacing:-0.131px;">Cedar Rapids-Iowa City, IA</div>
<div class="b" style="left:692px;top:258px;width:3320px;height:2px;background:#d3dae6;"></div>
<svg class="b" style="left:700px;top:140px;" width="30" height="30" viewBox="0 0 30 30"><g fill="none" stroke="#1a1c21" stroke-width="1.4" stroke-linecap="butt" stroke-linejoin="round"><line x1="7.4" y1="18.3" x2="20.2" y2="6.3"/><polyline points="17.7,2.4 24.4,2.4 24.4,8.6"/><polyline points="3.8,15.7 3.8,22 10.6,22"/></g></svg>
<div class="b" style="left:746px;top:138px;width:32px;height:32px;background:#fff;border:2px solid #cfd0d3;border-radius:8px;"></div>
<div class="t" style="left:795.00px;top:148px;font-size:24px;line-height:24px;font-weight:400;font-family:'Liberation Mono',monospace;color:#343741;letter-spacing:-0.106px;">Aug 18, 2022 @ 14:01:05.297</div>
<div class="b" style="left:1216.4px;top:157.2px;width:9.3px;height:2.1px;background:#343741;border-radius:1px;"></div>
<div class="b" style="left:2619.6px;top:157.2px;width:9.3px;height:2.1px;background:#343741;border-radius:1px;"></div>
<div class="b" style="left:692px;top:388px;width:3320px;height:2px;background:#d3dae6;"></div>
<svg class="b" style="left:700px;top:270px;" width="30" height="30" viewBox="0 0 30 30"><g fill="none" stroke="#1a1c21" stroke-width="1.4" stroke-linecap="butt" stroke-linejoin="round"><line x1="7.4" y1="18.3" x2="20.2" y2="6.3"/><polyline points="17.7,2.4 24.4,2.4 24.4,8.6"/><polyline points="3.8,15.7 3.8,22 10.6,22"/></g></svg>
<div class="b" style="left:746px;top:268px;width:32px;height:32px;background:#fff;border:2px solid #cfd0d3;border-radius:8px;"></div>
<div class="t" style="left:795.00px;top:278px;font-size:24px;line-height:24px;font-weight:400;font-family:'Liberation Mono',monospace;color:#343741;letter-spacing:-0.106px;">Aug 18, 2022 @ 13:46:36.315</div>
<div class="b" style="left:1216.4px;top:287.2px;width:9.3px;height:2.1px;background:#343741;border-radius:1px;"></div>
<div class="b" style="left:2619.6px;top:287.2px;width:9.3px;height:2.1px;background:#343741;border-radius:1px;"></div>
<div class="b" style="left:692px;top:518px;width:3320px;height:2px;background:#d3dae6;"></div>
<svg class="b" style="left:700px;top:400px;" width="30" height="30" viewBox="0 0 30 30"><g fill="none" stroke="#1a1c21" stroke-width="1.4" stroke-linecap="butt" stroke-linejoin="round"><line x1="7.4" y1="18.3" x2="20.2" y2="6.3"/><polyline points="17.7,2.4 24.4,2.4 24.4,8.6"/><polyline points="3.8,15.7 3.8,22 10.6,22"/></g></svg>
<div class="b" style="left:746px;top:398px;width:32px;height:32px;background:#fff;border:2px solid #cfd0d3;border-radius:8px;"></div>
<div class="t" style="left:795.00px;top:408px;font-size:24px;line-height:24px;font-weight:400;font-family:'Liberation Mono',monospace;color:#343741;letter-spacing:-0.106px;">Aug 18, 2022 @ 13:36:12.692</div>
<div class="b" style="left:1216.4px;top:417.2px;width:9.3px;height:2.1px;background:#343741;border-radius:1px;"></div>
<div class="b" style="left:2619.6px;top:417.2px;width:9.3px;height:2.1px;background:#343741;border-radius:1px;"></div>
<div class="b" style="left:692px;top:648px;width:3320px;height:2px;background:#d3dae6;"></div>
<svg class="b" style="left:700px;top:530px;" width="30" height="30" viewBox="0 0 30 30"><g fill="none" stroke="#1a1c21" stroke-width="1.4" stroke-linecap="butt" stroke-linejoin="round"><line x1="7.4" y1="18.3" x2="20.2" y2="6.3"/><polyline points="17.7,2.4 24.4,2.4 24.4,8.6"/><polyline points="3.8,15.7 3.8,22 10.6,22"/></g></svg>
<div class="b" style="left:746px;top:528px;width:32px;height:32px;background:#fff;border:2px solid #cfd0d3;border-radius:8px;"></div>
<div class="t" style="left:795.00px;top:538px;font-size:24px;line-height:24px;font-weight:400;font-family:'Liberation Mono',monospace;color:#343741;letter-spacing:-0.106px;">Aug 18, 2022 @ 12:27:14.527</div>
<div class="b" style="left:1216.4px;top:547.2px;width:9.3px;height:2.1px;background:#343741;border-radius:1px;"></div>
<div class="b" style="left:2619.6px;top:547.2px;width:9.3px;height:2.1px;background:#343741;border-radius:1px;"></div>
<div class="b" style="left:692px;top:778px;width:3320px;height:2px;background:#d3dae6;"></div>
<svg class="b" style="left:700px;top:660px;" width="30" height="30" viewBox="0 0 30 30"><g fill="none" stroke="#1a1c21" stroke-width="1.4" stroke-linecap="butt" stroke-linejoin="round"><line x1="7.4" y1="18.3" x2="20.2" y2="6.3"/><polyline points="17.7,2.4 24.4,2.4 24.4,8.6"/><polyline points="3.8,15.7 3.8,22 10.6,22"/></g></svg>
<div class="b" style="left:746px;top:658px;width:32px;height:32px;background:#fff;border:2px solid #cfd0d3;border-radius:8px;"></div>
<div class="t" style="left:795.00px;top:668px;font-size:24px;line-height:24px;font-weight:400;font-family:'Liberation Mono',monospace;color:#343741;letter-spacing:-0.106px;">Aug 18, 2022 @ 12:24:06.875</div>
<div class="b" style="left:1216.4px;top:677.2px;width:9.3px;height:2.1px;background:#343741;border-radius:1px;"></div>
<div class="b" style="left:2619.6px;top:677.2px;width:9.3px;height:2.1px;background:#343741;border-radius:1px;"></div>
<div class="b" style="left:692px;top:908px;width:3320px;height:2px;background:#d3dae6;"></div>
<svg class="b" style="left:700px;top:790px;" width="30" height="30" viewBox="0 0 30 30"><g fill="none" stroke="#1a1c21" stroke-width="1.4" stroke-linecap="butt" stroke-linejoin="round"><line x1="7.4" y1="18.3" x2="20.2" y2="6.3"/><polyline points="17.7,2.4 24.4,2.4 24.4,8.6"/><polyline points="3.8,15.7 3.8,22 10.6,22"/></g></svg>
<div class="b" style="left:746px;top:788px;width:32px;height:32px;background:#fff;border:2px solid #cfd0d3;border-radius:8px;"></div>
<div class="t" style="left:795.00px;top:798px;font-size:24px;line-height:24px;font-weight:400;font-family:'Liberation Mono',monospace;color:#343741;letter-spacing:-0.106px;">Aug 18, 2022 @ 12:18:06.737</div>
<div class="b" style="left:1216.4px;top:807.2px;width:9.3px;height:2.1px;background:#343741;border-radius:1px;"></div>
<div class="b" style="left:2619.6px;top:807.2px;width:9.3px;height:2.1px;background:#343741;border-radius:1px;"></div>
<div class="b" style="left:692px;top:1038px;width:3320px;height:2px;background:#d3dae6;"></div>
<svg class="b" style="left:700px;top:920px;" width="30" height="30" viewBox="0 0 30 30"><g fill="none" stroke="#1a1c21" stroke-width="1.4" stroke-linecap="butt" stroke-linejoin="round"><line x1="7.4" y1="18.3" x2="20.2" y2="6.3"/><polyline points="17.7,2.4 24.4,2.4 24.4,8.6"/><polyline points="3.8,15.7 3.8,22 10.6,22"/></g></svg>
<div class="b" style="left:746px;top:918px;width:32px;height:32px;background:#fff;border:2px solid #cfd0d3;border-radius:8px;"></div>
<div class="t" style="left:795.00px;top:928px;font-size:24px;line-height:24px;font-weight:400;font-family:'Liberation Mono',monospace;color:#343741;letter-spacing:-0.106px;">Aug 18, 2022 @ 12:04:41.998</div>
<div class="t" style="left:1215.60px;top:928px;font-size:24px;line-height:24px;font-weight:400;font-family:'Liberation Mono',monospace;color:#343741;letter-spacing:0.000px;">106</div>
<div class="t" style="left:2618.75px;top:928px;font-size:24px;line-height:24px;font-weight:400;font-family:'Liberation Mono',monospace;color:#343741;letter-spacing:-0.104px;">Albuquerque-Santa Fe-Las Vegas, NM</div>
<div class="b" style="left:692px;top:1168px;width:3320px;height:2px;background:#d3dae6;"></div>
<svg class="b" style="left:700px;top:1050px;" width="30" height="30" viewBox="0 0 30 30"><g fill="none" stroke="#1a1c21" stroke-width="1.4" stroke-linecap="butt" stroke-linejoin="round"><line x1="7.4" y1="18.3" x2="20.2" y2="6.3"/><polyline points="17.7,2.4 24.4,2.4 24.4,8.6"/><polyline points="3.8,15.7 3.8,22 10.6,22"/></g></svg>
<div class="b" style="left:746px;top:1048px;width:32px;height:32px;background:#fff;border:2px solid #cfd0d3;border-radius:8px;"></div>
<div class="t" style="left:795.00px;top:1058px;font-size:24px;line-height:24px;font-weight:400;font-family:'Liberation Mono',monospace;color:#343741;letter-spacing:-0.106px;">Aug 18, 2022 @ 11:54:36.220</div>
<div class="t" style="left:1215.60px;top:1058px;font-size:24px;line-height:24px;font-weight:400;font-family:'Liberation Mono',monospace;color:#343741;letter-spacing:0.000px;">424</div>
<div class="t" style="left:2618.75px;top:1058px;font-size:24px;line-height:24px;font-weight:400;font-family:'Liberation Mono',monospace;color:#343741;letter-spacing:-0.106px;">Paducah-Mayfield, KY-IL</div>
<svg class="b" style="left:700px;top:1180px;" width="30" height="30" viewBox="0 0 30 30"><g fill="none" stroke="#1a1c21" stroke-width="1.4" stroke-linecap="butt" stroke-linejoin="round"><line x1="7.4" y1="18.3" x2="20.2" y2="6.3"/><polyline points="17.7,2.4 24.4,2.4 24.4,8.6"/><polyline points="3.8,15.7 3.8,22 10.6,22"/></g></svg>
<div class="b" style="left:746px;top:1178px;width:32px;height:32px;background:#fff;border:2px solid #cfd0d3;border-radius:8px;"></div>
<div class="t" style="left:795.00px;top:1188px;font-size:24px;line-height:24px;font-weight:400;font-family:'Liberation Mono',monospace;color:#343741;letter-spacing:-0.106px;">Aug 18, 2022 @ 11:38:27.926</div>
<div class="t" style="left:1215.60px;top:1188px;font-size:24px;line-height:24px;font-weight:400;font-family:'Liberation Mono',monospace;color:#343741;letter-spacing:0.000px;">538</div>
<div class="t" style="left:2618.75px;top:1188px;font-size:24px;line-height:24px;font-weight:400;font-family:'Liberation Mono',monospace;color:#343741;letter-spacing:-0.116px;">Tulsa-Muskogee-Bartlesville, OK</div>
</div>
<div class="b" style="left:689px;top:1792px;width:3358px;height:2px;background:#d3dae6;"></div>
<div class="t" style="left:707.00px;top:1821px;font-size:25px;line-height:25px;font-weight:400;font-family:'Liberation Sans',sans-serif;color:#343741;letter-spacing:-0.059px;">Rows per page: 100</div>
<svg class="b" style="left:948px;top:1826px;" width="25" height="17" viewBox="0 0 25 17"><polyline points="3.65,4.13 12.00,12.87 20.35,4.13" fill="none" stroke="#343741" stroke-width="1.8" stroke-linecap="round" stroke-linejoin="round"/></svg>
<svg class="b" style="left:3821px;top:1820px;" width="16" height="28" viewBox="0 0 16 28"><polyline points="13,2 2.5,13.5 13,25" fill="none" stroke="#a2abba" stroke-width="2.6" stroke-linecap="round"/></svg>
<div class="t" style="left:3869.00px;top:1819px;font-size:30px;line-height:30px;font-weight:700;font-family:'Liberation Sans',sans-serif;color:#1e6bc2;letter-spacing:0.000px;">1</div>
<div class="b" style="left:3869px;top:1846px;width:14px;height:2px;background:#1e6bc2;"></div>
<div class="t" style="left:3916.00px;top:1819px;font-size:30px;line-height:30px;font-weight:400;font-family:'Liberation Sans',sans-serif;color:#343741;letter-spacing:0.000px;">2</div>
<div class="t" style="left:3965.50px;top:1819px;font-size:30px;line-height:30px;font-weight:400;font-family:'Liberation Sans',sans-serif;color:#343741;letter-spacing:0.000px;">3</div>
<svg class="b" style="left:4013px;top:1820px;" width="16" height="28" viewBox="0 0 16 28"><polyline points="3,2 13.5,13.5 3,25" fill="none" stroke="#343741" stroke-width="2.6" stroke-linecap="round"/></svg>
</body></html>
